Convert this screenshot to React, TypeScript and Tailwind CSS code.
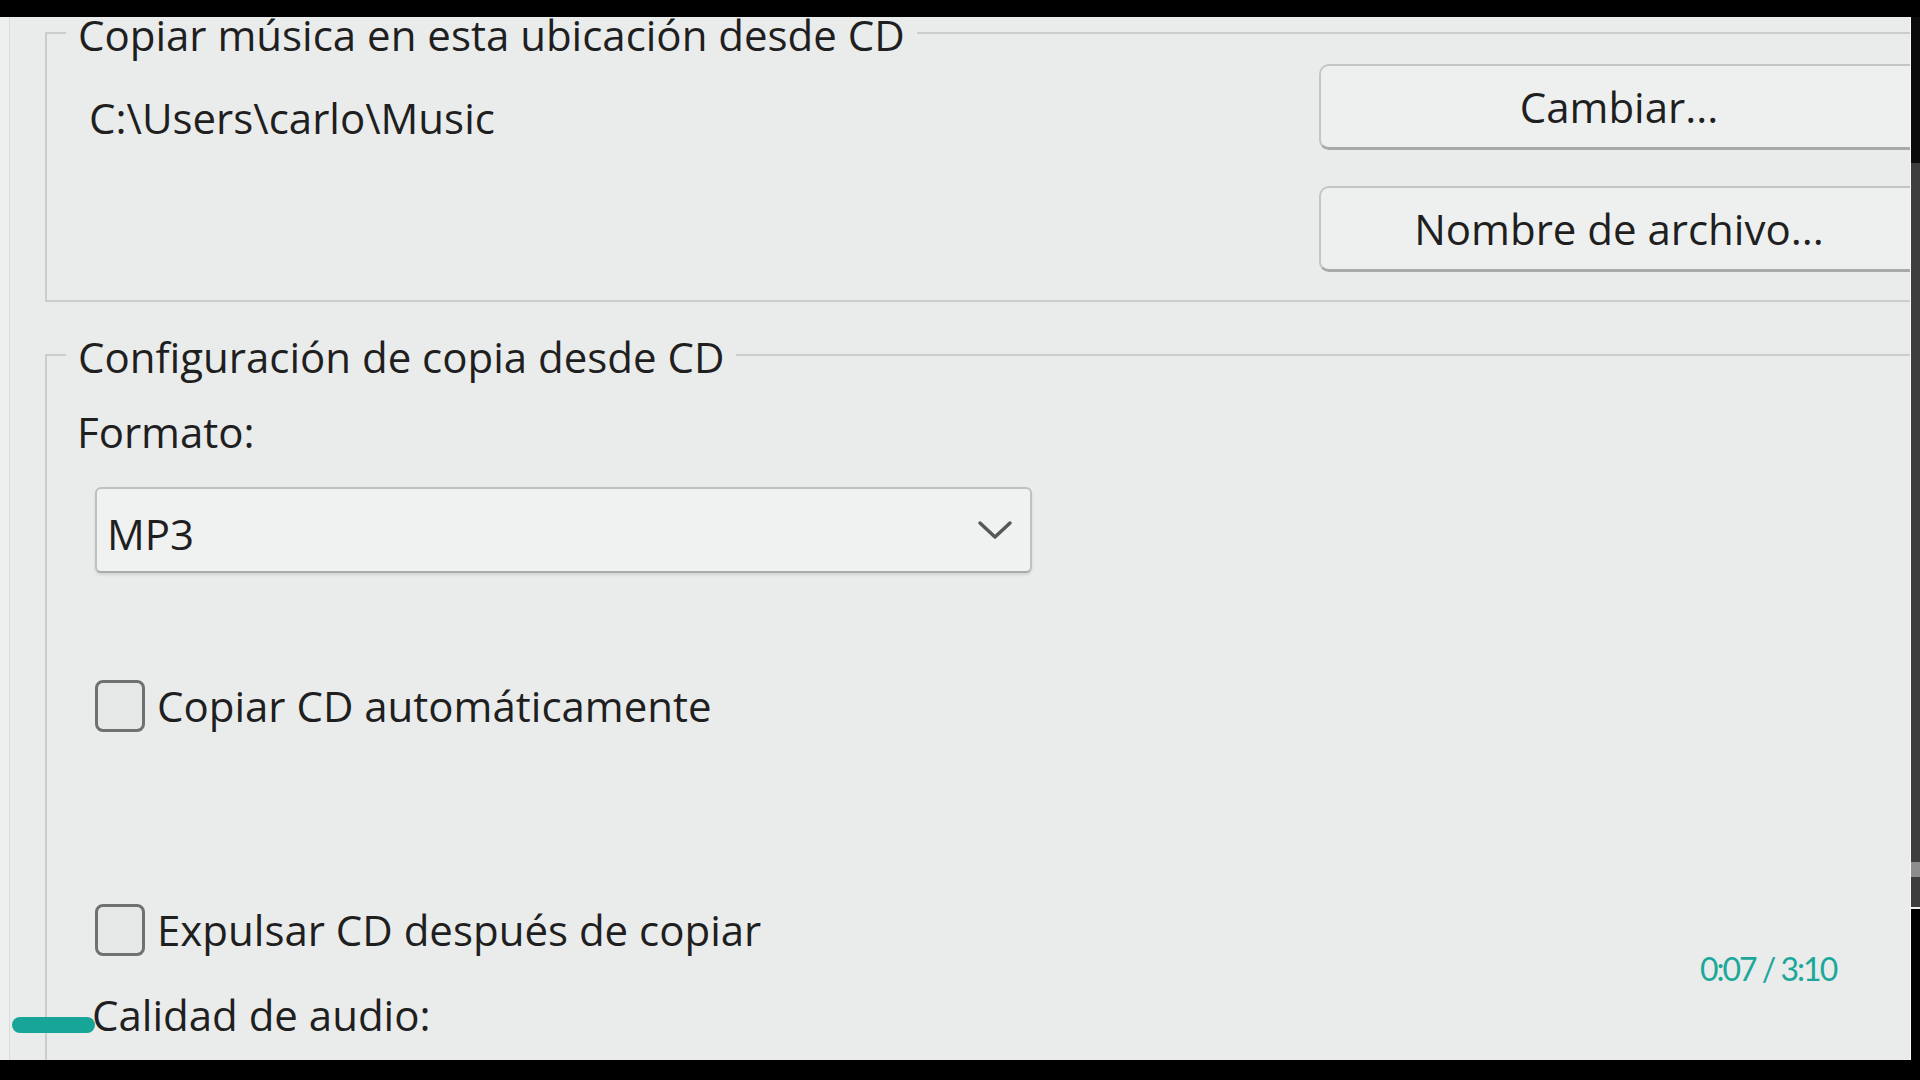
import React from "react";

const TXT = "text-[42px] leading-[48px] text-[#1f1f1f] whitespace-nowrap";

function Legend({ children }: { children: React.ReactNode }) {
  return (
    <div className={"-mt-[23px] ml-[19px] w-fit bg-[#eaebeb] px-[12px] h-[48px] " + TXT}>
      {children}
    </div>
  );
}

function WinButton({ children }: { children: React.ReactNode }) {
  return (
    <div className={"h-[86px] w-full rounded-[10px] border-2 border-[#c4c5c5] border-b-[3px] border-b-[#a8a9a9] bg-[#eeefef] flex items-center justify-center " + TXT}>
      {children}
    </div>
  );
}

function CheckRow({ label, className }: { label: string; className: string }) {
  return (
    <div className={"flex items-center ml-[48px] gap-[12px] " + className}>
      <div className="w-[50px] h-[52px] shrink-0 rounded-[8px] border-[3px] border-[#6f7070] bg-[#e6e7e7]" />
      <div className={TXT}>{label}</div>
    </div>
  );
}

export default function App() {
  return (
    <div className="relative w-[1920px] h-[1080px] bg-black overflow-hidden flex flex-col font-['Open_Sans',sans-serif]">
      <div className="h-[17px] shrink-0 bg-black" />
      <div className="h-[1043px] shrink-0 flex">
        <div className="flex-1 bg-[#eaebeb] flex overflow-hidden">
          <div className="w-[10px] shrink-0 bg-[#eeefef] border-r border-[#d9dada]" />
          <div className="flex-1 flex flex-col pl-[35px] min-w-0">
            {/* Group 1 */}
            <div className="mt-[15px] w-[1880px] shrink-0 border-t-2 border-l-2 border-b-2 border-[#cbcccc] flex flex-col pb-[28px]">
              <Legend>Copiar música en esta ubicación desde CD</Legend>
              <div className="flex items-start">
                <div className={"w-[1272px] shrink-0 pl-[42px] pt-[35px] " + TXT}>
                  C:\Users\carlo\Music
                </div>
                <div className="w-[600px] shrink-0 mt-[5px] flex flex-col gap-[36px]">
                  <WinButton>Cambiar...</WinButton>
                  <WinButton>Nombre de archivo...</WinButton>
                </div>
              </div>
            </div>
            {/* Group 2 */}
            <div className="mt-[52px] w-[1880px] flex-1 border-t-2 border-l-2 border-[#cbcccc] flex flex-col">
              <Legend>Configuración de copia desde CD</Legend>
              <div className={"mt-[27px] ml-[30px] " + TXT}>Formato:</div>
              <div className="mt-[31px] ml-[48px] w-[937px] h-[86px] rounded-[6px] border-2 border-[#bfc0c0] border-b-[#a9aaaa] bg-[#f0f1f1] shadow-[0_2px_3px_rgba(0,0,0,0.10)] flex items-center justify-between pl-[10px] pr-[17px]">
                <span className={"pt-[7px] " + TXT}>MP3</span>
                <svg width="36" height="22" viewBox="0 0 36 22" fill="none">
                  <polyline points="3,4 18,18 33,4" stroke="#575757" strokeWidth="3.5" strokeLinecap="round" strokeLinejoin="round" />
                </svg>
              </div>
              <CheckRow className="mt-[107px]" label="Copiar CD automáticamente" />
              <CheckRow className="mt-[172px]" label="Expulsar CD después de copiar" />
              <div className={"mt-[35px] ml-[45px] " + TXT}>Calidad de audio:</div>
            </div>
          </div>
        </div>
        <div className="w-[10px] shrink-0 flex flex-col border-l border-[#f7f7f7]">
          <div className="h-[146px] bg-[#0b0b0b]" />
          <div className="h-[699px] bg-[#3e3e3e]" />
          <div className="h-[15px] bg-[#8d8d8d]" />
          <div className="h-[30px] bg-[#3e3e3e]" />
          <div className="h-[2px] bg-[#f0f0f0]" />
          <div className="flex-1 bg-black" />
        </div>
      </div>
      <div className="flex-1 bg-black" />

      {/* video player overlays */}
      <div className="absolute left-[12px] top-[1017px] w-[83px] h-[16px] rounded-full bg-[#17a597]" />
      <div className="absolute left-[1700px] top-[953px] text-[32px] leading-[32px] tracking-[-2px] text-[#1ba89a] font-['Lato',sans-serif] whitespace-nowrap">
        0:07 / 3:10
      </div>
    </div>
  );
}
